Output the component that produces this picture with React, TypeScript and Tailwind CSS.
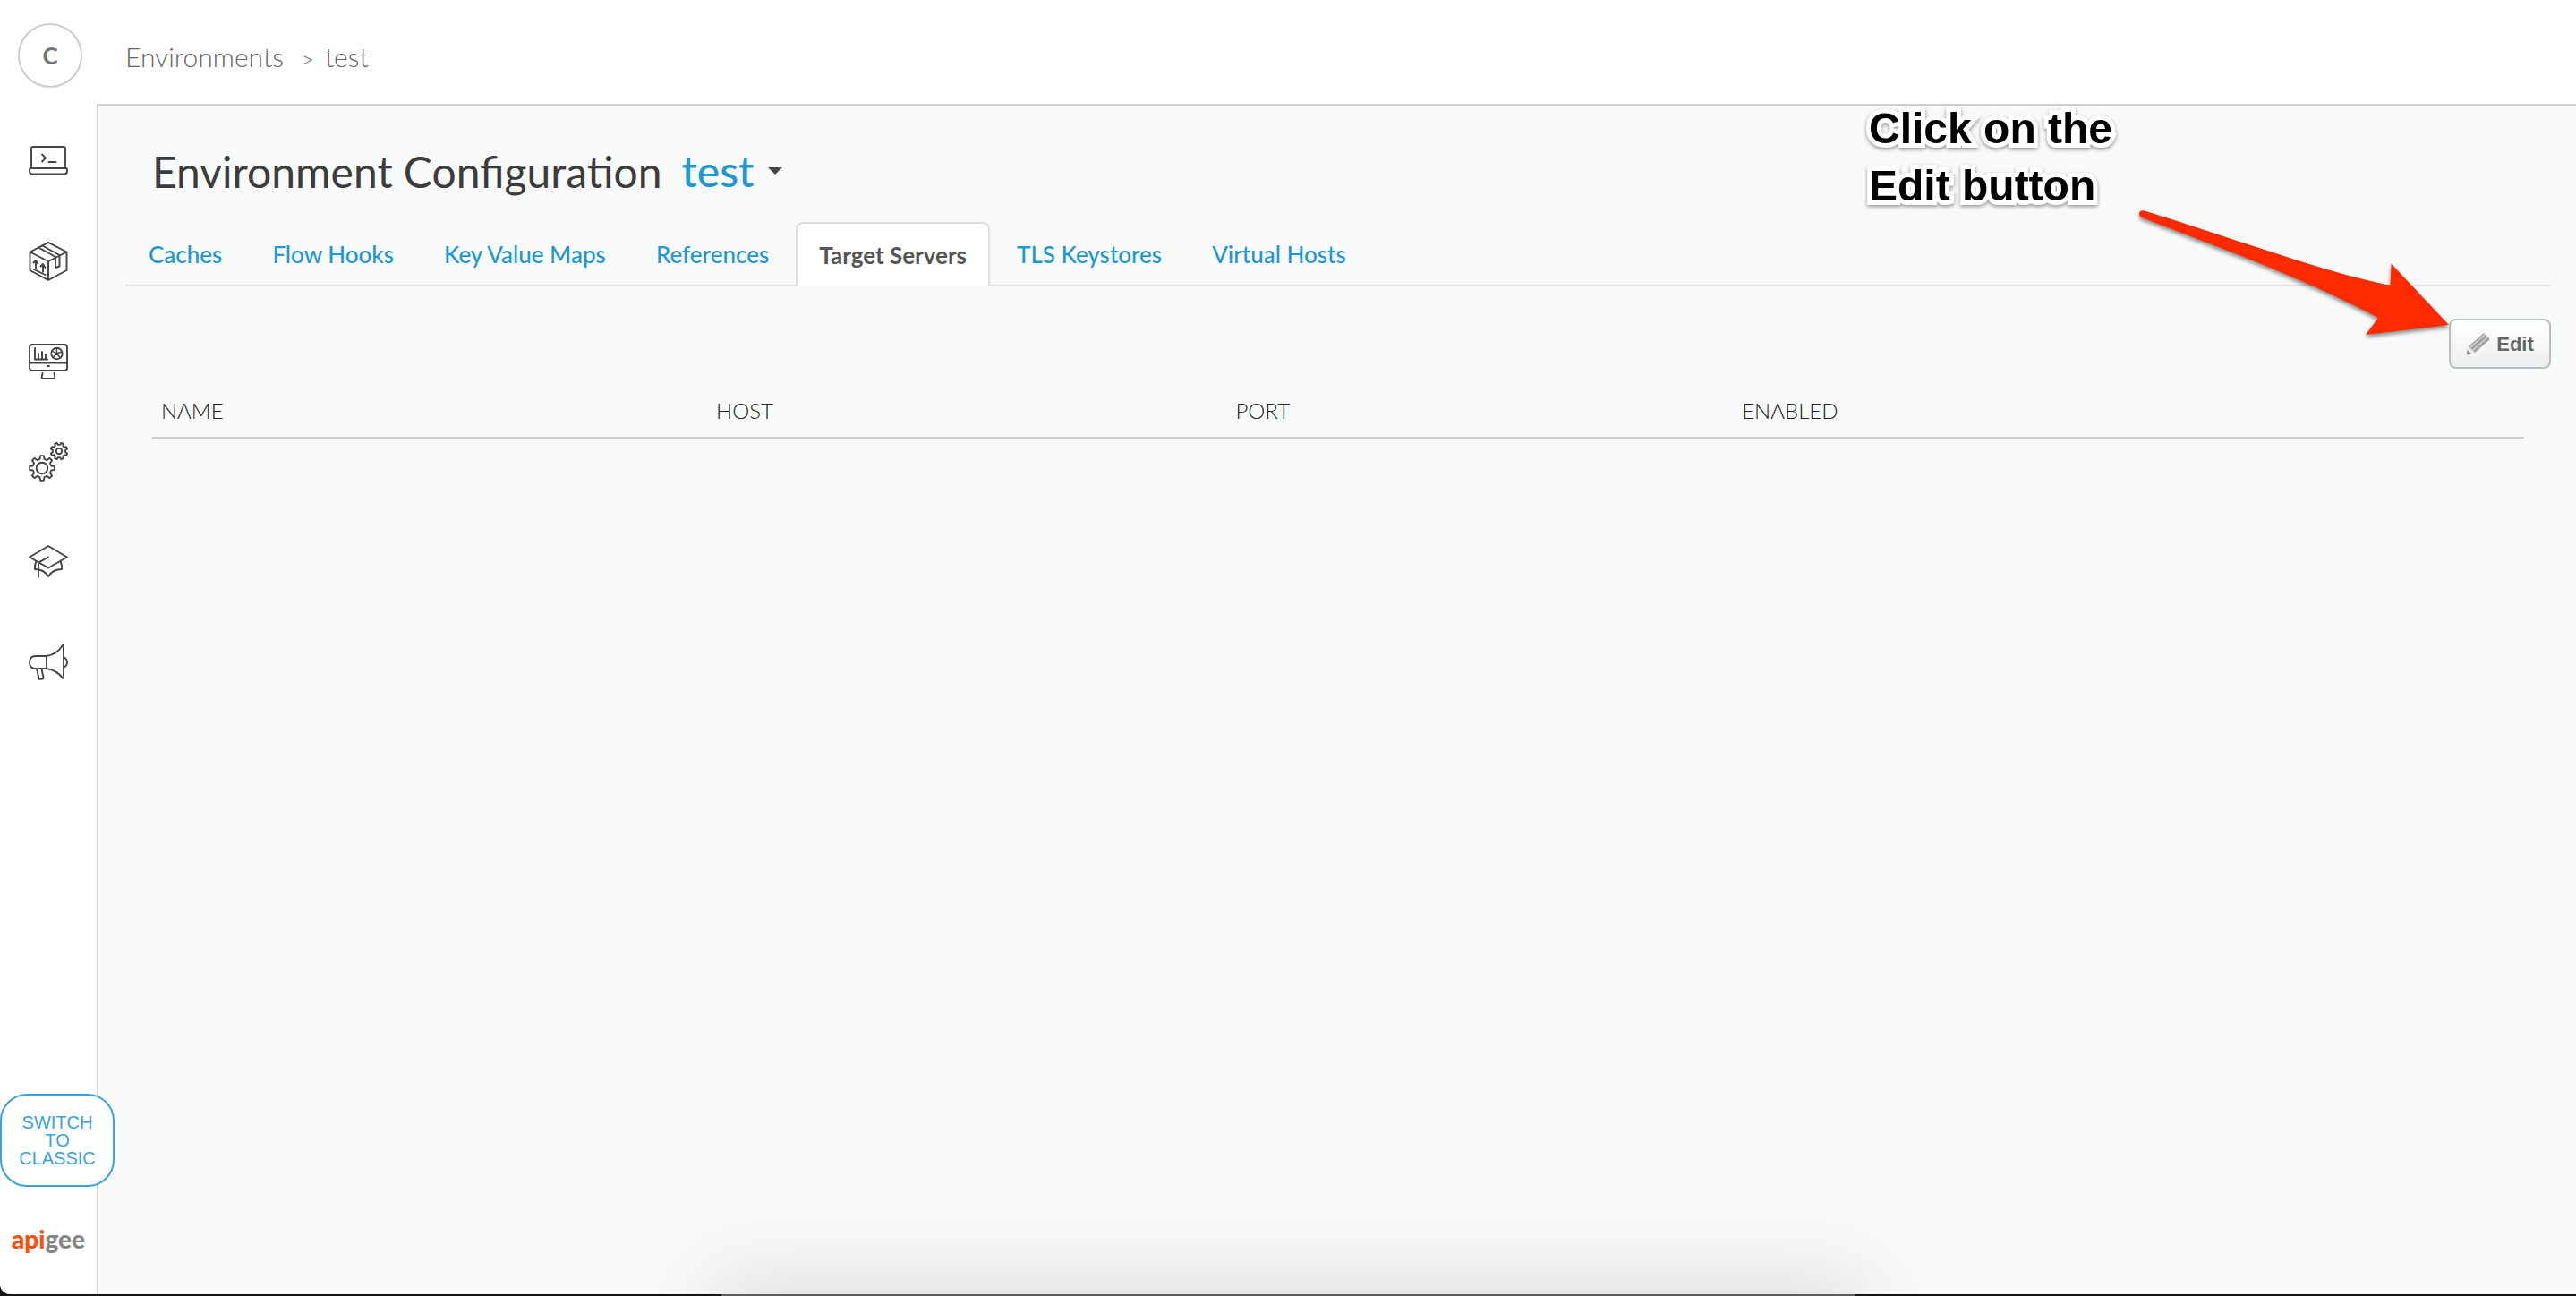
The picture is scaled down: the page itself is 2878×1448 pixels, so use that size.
import type { ReactNode } from "react";

function Icon({ label, children }: { label: string; children: ReactNode }) {
  return (
    <a href="#" aria-label={label} className="flex h-28 w-full items-center justify-center">
      <svg
        viewBox="0 0 44 44"
        className="size-11"
        fill="none"
        stroke="#444444"
        strokeWidth="1.9"
        strokeLinecap="round"
        strokeLinejoin="round"
        aria-hidden="true"
      >
        {children}
      </svg>
    </a>
  );
}

/* Outline of a cog with eight rounded teeth. */
function cog(cx: number, cy: number, outer: number, inner: number) {
  const points: string[] = [];
  const offsets: [number, number][] = [
    [-0.24, inner],
    [-0.13, outer],
    [0.13, outer],
    [0.24, inner],
  ];
  for (let i = 0; i < 8; i++) {
    for (const [offset, radius] of offsets) {
      const a = (i * Math.PI) / 4 + offset;
      points.push(`${(cx + radius * Math.cos(a)).toFixed(2)} ${(cy + radius * Math.sin(a)).toFixed(2)}`);
    }
  }
  return `M${points.join("L")}Z`;
}

function Sidebar() {
  return (
    <aside className="relative flex w-[110px] shrink-0 flex-col border-r-2 border-[#cccfce] bg-white">
      <nav className="flex flex-col pt-2" aria-label="Main">
        <Icon label="Develop">
          <path d="M3 30V8q0-2 2-2h34q2 0 2 2v22" />
          <path d="M2 30h40q1 0 1 1.500v2q0 3-3 3H4q-3 0-3-3v-2q0-1.500 1-1.500z" />
          <path d="M15 14.500l4 4-4 4M22.500 23h8" />
        </Icon>
        <Icon label="Publish">
          <path d="M22 .9l20.500 10.600v20.500L22 43 1.500 32V11.500zM1.500 11.500L22 22l20.500-10.500M22 22v21" />
          <path d="M11 6.500l19 10.500v12l4.500-1.500V15L15.500 4.500" />
          <path d="M8 29.500v-8M5.500 23.500L8 21l2.500 4M16 33.500v-8M13.500 27.500L16 25l2.500 4M6 31l12.500 6" />
        </Icon>
        <Icon label="Analyze">
          <rect x="1" y="3" width="42" height="29" rx="3" />
          <path d="M1 23.500h42M21 27h2M15.500 35l-.8 4.500q-.2 1.500 1.300 1.500h12q1.500 0 1.300-1.500L28.500 35" />
          <path d="M7 7v12.500h14M11 19v-6M15 19v-8M19 19v-5" />
          <circle cx="31.500" cy="13" r="6.200" />
          <path d="M31.500 13V6.800M31.500 13l5.800-2M31.500 13l4 5M31.500 13L27 17.500M31.500 13l-5.500-3" strokeWidth="1.4" />
        </Icon>
        <Icon label="Admin">
          <path d={cog(15, 29, 14, 10.5)} />
          <circle cx="15" cy="29" r="6.300" />
          <path d={cog(34, 10, 9.5, 7.2)} transform="rotate(22.5 34 10)" />
          <circle cx="34" cy="10" r="3.200" />
        </Icon>
        <Icon label="Learn">
          <path d="M22 4l21 12.500L22 28.500 1 16.500zM22 16.500l-11 6.200v16" />
          <path d="M8.500 21q-2 4-1.500 9 10 0 15 8 5-8 15-8 .5-5-1.500-9" />
        </Icon>
        <Icon label="What's new">
          <path d="M20 15H8q-7 0-7 7t7 7h12zM20 15Q32 13 38 3q1-1 1 1v35q0 1.500-1 .5Q32 31 20 29M39 16q4 2 4 6t-4 6M9 29l2.500 11q.3 1 1.300.9l3-.4q1-.2.8-1.200L14.500 29.500" />
        </Icon>
      </nav>
      <div className="mt-auto flex flex-col">
        <button
          type="button"
          className="z-10 h-[104px] w-32 rounded-[30px] border-2 border-[#38a3de] bg-white px-4 text-center font-['Liberation_Sans',sans-serif] text-xl leading-5 text-[#38a3de]"
        >
          SWITCH
          <br />
          TO
          <br />
          CLASSIC
        </button>
        <a
          href="#"
          className="flex h-[120px] items-center justify-center pb-1 font-['Lato',sans-serif] text-[28px] leading-8 font-black text-[#848684]"
        >
          <span className="text-[#ff4e0e]">api</span>gee
        </a>
      </div>
    </aside>
  );
}

const tabs = ["Caches", "Flow Hooks", "Key Value Maps", "References", "Target Servers", "TLS Keystores", "Virtual Hosts"];

function Tabs() {
  return (
    <nav className="flex gap-1 border-b-2 border-[#dddfde]" aria-label="Configuration sections">
      {tabs.map((tab) =>
        tab === "Target Servers" ? (
          <a
            key={tab}
            href="#"
            aria-current="page"
            className="-mb-0.5 flex h-[72px] items-center rounded-t-lg border-2 border-b-0 border-[#dddfde] bg-white px-6 font-bold text-[#555555]"
          >
            {tab}
          </a>
        ) : (
          <a
            key={tab}
            href="#"
            className="flex h-[70px] items-center border-x-2 border-t-2 border-transparent px-6 font-medium text-[#1f97d1]"
          >
            {tab}
          </a>
        ),
      )}
    </nav>
  );
}

function PencilIcon() {
  return (
    <svg viewBox="0 0 28 26" className="h-[26px] w-7" aria-hidden="true">
      <path d="M20 1l7 7L10 23l-7-7z" fill="#a3a3a3" />
      <path d="M4.500 17.500L21.500 2.500M7.500 20.500L24.500 5.500" stroke="#d0d0d0" strokeWidth="1.500" />
      <path d="M3 16l7 7-9 2z" fill="#e4e4e4" />
      <path d="M1.500 20l4.500 4.500-5 1z" fill="#8a8a8a" />
    </svg>
  );
}

function Annotation() {
  return (
    <div className="pointer-events-none absolute -top-1.5 right-[142px] w-[648px]">
      <p className="font-['Liberation_Sans',sans-serif] text-5xl leading-[64px] font-bold text-black [-webkit-text-stroke:10px_white] [filter:drop-shadow(0_2px_2px_rgba(0,0,0,0.4))] [paint-order:stroke_fill]">
        Click on the
        <br />
        Edit button
      </p>
      <svg viewBox="2088 112 648 276" className="absolute top-0 left-0 w-full overflow-visible" aria-hidden="true">
        <path
          d="M2396 235.500Q2390 234 2390 239Q2390 242 2394 243.500C2500 284 2580 314 2657 355L2643 374L2736 363L2671.500 294.500L2670.500 318.500C2610 308 2500 268 2396 235.500Z"
          fill="#ff2a00"
          className="[filter:drop-shadow(0_3px_2px_rgba(0,0,0,0.45))]"
        />
      </svg>
    </div>
  );
}

export default function App() {
  return (
    <div className="flex min-h-screen flex-col bg-[#151515] pb-0.5 font-['Lato',sans-serif]">
      <div className="relative flex grow flex-col overflow-hidden rounded-bl-xl bg-white">
        <header className="flex h-[116px] items-center">
          <div className="flex w-[112px] justify-center pt-2">
            <button
              type="button"
              className="flex size-[72px] items-center justify-center rounded-full border-2 border-[#cccccc] text-[26px] font-bold text-[#757575]"
            >
              C
            </button>
          </div>
          <nav className="flex items-baseline pt-3 pl-7 text-3xl leading-8 font-light text-[#666666]" aria-label="Breadcrumb">
            <a href="#">Environments</a>
            <span className="pr-3 pl-5 text-2xl">&gt;</span>
            <span>test</span>
          </nav>
        </header>
        <div className="flex grow">
          <Sidebar />
          <main className="relative flex grow flex-col border-t-2 border-[#cccfce] bg-[#f8faf9]">
            <div className="flex flex-col pr-7 pl-[30px]">
              <div className="flex h-[130px] items-center pt-[18px] pl-[30px] text-5xl">
                <h1 className="text-[#3c3c3c]">Environment Configuration</h1>
                <button type="button" className="flex items-center gap-4 pb-0.5 pl-[22px] font-medium text-[#1f97d1]">
                  test
                  <svg viewBox="0 0 16 8" className="h-2 w-4" aria-hidden="true">
                    <path d="M0 0h16L8 8z" fill="#444444" />
                  </svg>
                </button>
              </div>
              <div className="text-[26px] leading-8">
                <Tabs />
              </div>
              <div className="flex justify-end pt-9">
                <button
                  type="button"
                  className="flex h-14 w-[114px] items-center justify-center gap-1.5 rounded-lg border-2 border-[#b7c0c4] bg-linear-to-b from-white to-[#eeeeee] font-['Liberation_Sans',sans-serif] text-[22px] font-bold text-[#666666]"
                >
                  <PencilIcon />
                  Edit
                </button>
              </div>
              <div className="pt-[25px] pr-[30px] pl-[30px]">
                <table className="w-full table-fixed border-collapse text-left text-2xl text-[#222222]">
                  <colgroup>
                    <col className="w-[23.4%]" />
                    <col className="w-[21.9%]" />
                    <col className="w-[21.35%]" />
                    <col />
                  </colgroup>
                  <thead>
                    <tr className="h-[52px] border-b-2 border-[#cccfce]">
                      {["NAME", "HOST", "PORT", "ENABLED"].map((name) => (
                        <th key={name} scope="col" className="px-2.5 pb-2 font-light">
                          {name}
                        </th>
                      ))}
                    </tr>
                  </thead>
                </table>
              </div>
            </div>
            <Annotation />
          </main>
        </div>
        <div className="pointer-events-none absolute top-full left-[28%] h-20 w-[44%] shadow-[0_0_100px_10px_rgba(0,0,0,0.13)]" />
      </div>
      <div className="absolute bottom-0 left-[28%] h-0.5 w-[44%] bg-[#5c5c5c]" />
    </div>
  );
}
